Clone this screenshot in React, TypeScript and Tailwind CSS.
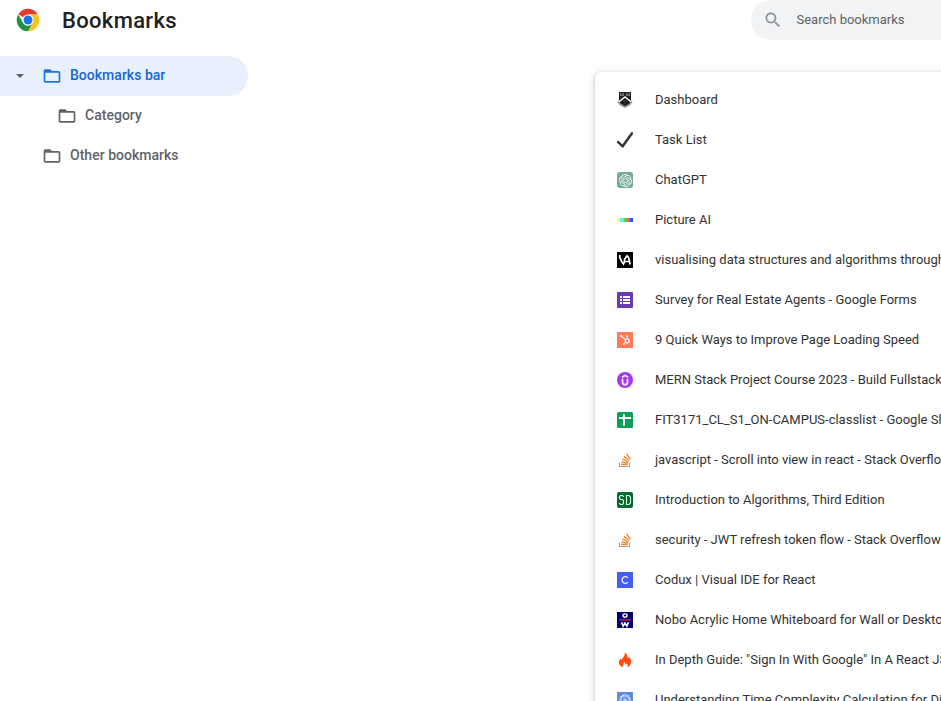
import type { ReactNode } from 'react';
import { SiOpenai, SiHubspot } from 'react-icons/si';

function Svg({ children }: { children: ReactNode }) {
  return (
    <svg width="16" height="16" viewBox="0 0 16 16" className="block shrink-0">
      {children}
    </svg>
  );
}

function ChromeLogo() {
  return (
    <svg width="24" height="24" viewBox="0 0 48 48" className="block shrink-0">
      <path d="M24 24 L4.5 12.5 A22.5 22.5 0 0 1 43.5 12.75 L24 12.75 Z" fill="#e33b2e" />
      <path d="M24 12.75 H43.5 A22.5 22.5 0 0 1 24 46.5 L33.74 29.6 Z" fill="#fcc31e" />
      <path d="M4.5 12.75 L14.26 29.6 A11.25 11.25 0 0 0 33.74 29.6 L24 46.5 A22.5 22.5 0 0 1 4.5 12.75 Z" fill="#229342" />
      <circle cx="24" cy="24" r="11.25" fill="#fff" />
      <circle cx="24" cy="24" r="8.9" fill="#1a73e8" />
    </svg>
  );
}

function Folder({ className }: { className: string }) {
  return (
    <svg width="20" height="20" viewBox="0 0 24 24" fill="currentColor" className={`block shrink-0 ${className}`}>
      <path d="M20 6h-8l-2-2H4c-1.1 0-1.99.9-1.99 2L2 18c0 1.1.9 2 2 2h16c1.1 0 2-.9 2-2V8c0-1.1-.9-2-2-2zm0 12H4V8h16v10z" />
    </svg>
  );
}

function Crest() {
  return (
    <Svg>
      <path d="M2 0h12v8l1.500 2c-.5 2.500-3.500 4-7.500 6-4-2-7-3.500-7.500-6L2 8z" fill="#a8a8ab" />
      <path d="M2 0h12v8.500c0 2.500-3 4-6 5.500-3-1.500-6-3-6-5.500z" fill="#202022" />
      <path d="M3 1h4v3H3zM9 1h4v3H9z" fill="#6e7074" />
      <path d="M4 2h2M10 2h2" stroke="#303034" strokeWidth="1" />
      <path d="M2 9.800 8 5l6 4.800" stroke="#fff" strokeWidth="1.400" fill="none" />
      <path d="m8 6.800 3.400 2.900L8 13l-3.400-3.300z" fill="#111" />
      <path d="M6.500 9h1M8.500 9h1M7.500 11h1" stroke="#a0a0a4" strokeWidth=".8" />
      <path d="M3 11.800c1 1.300 3 2 5 3 2-1 4-1.700 5-3" stroke="#77777b" strokeWidth=".8" fill="none" />
    </Svg>
  );
}

function Check() {
  return (
    <Svg>
      <path d="M1.200 10.200 5.700 14.300 15 1.300" stroke="#31363d" strokeWidth="2.500" fill="none" strokeLinejoin="round" strokeLinecap="round" />
    </Svg>
  );
}

function ChatGpt() {
  return (
    <span className="flex size-4 items-center justify-center rounded-[3px] bg-[#75a99b] text-[#f0f7f4]">
      <SiOpenai size={13} />
    </span>
  );
}

function Rainbow() {
  return (
    <Svg>
      <path d="M0 6h3v4H0z" fill="#fff66f" />
      <path d="M3 6h4v4H3z" fill="#55f3e4" />
      <path d="M7 6h3v4H7z" fill="#62c94e" />
      <path d="M10 6h3v4h-3z" fill="#f4604a" />
      <path d="M13 6h3v4h-3z" fill="#354dfa" />
    </Svg>
  );
}

function VisuAlgo() {
  return (
    <Svg>
      <path d="M0 0h16v16H0z" fill="#000" />
      <path d="M2.800 3v2.500l1 2L5 10l1.500 2 1-2V7.500L8.500 6 10 3.800l1.500 1.700.8 3 .8 4M8 9.500h4" stroke="#fff" strokeWidth="1.700" fill="none" />
    </Svg>
  );
}

function Forms() {
  return (
    <Svg>
      <rect width="16" height="16" rx="1" fill="#673ab7" />
      <path d="M3 4h2v2H3zM6 4h7v2H6zM3 7h2v2H3zM6 7h7v2H6zM3 10h2v2H3zM6 10h7v2H6z" fill="#fff" />
    </Svg>
  );
}

function Hubspot() {
  return (
    <span className="flex size-4 items-center justify-center bg-[#ff7a59] text-white">
      <SiHubspot size={10} />
    </span>
  );
}

function Udemy() {
  return (
    <Svg>
      <circle cx="8" cy="8" r="8" fill="#a435f0" />
      <path d="M4.900 5.200 8 3.400l3.100 1.800" stroke="#fff" strokeWidth="1.600" fill="none" />
      <path d="M5.500 6.800v3.600c0 1.500.9 2.300 2.500 2.300s2.500-.8 2.500-2.300V6.800" stroke="#fff" strokeWidth="1.700" fill="none" />
    </Svg>
  );
}

function Sheets() {
  return (
    <Svg>
      <rect width="16" height="16" rx="1.500" fill="#109d59" />
      <path d="M6 2.200h1.900v11.600H6zM2 5h12v2H2z" fill="#fff" />
    </Svg>
  );
}

function StackOverflow() {
  return (
    <Svg>
      <path d="M2.500 10.500v4h10v-4" stroke="#a0a4a8" strokeWidth="1.200" fill="none" />
      <path d="M4.200 12.500h6.600M4.300 9.900l6.500 1.300M5.200 7l6.100 2.900M6.900 4.300l5.200 4.300M9.500 1.700l4 5.600" stroke="#f48225" strokeWidth="1.300" />
    </Svg>
  );
}

function ScienceDirect() {
  return (
    <Svg>
      <rect width="16" height="16" rx="2" fill="#006b2d" />
      <path d="M6.500 5V4.500l-1-1h-2l-1 1v2l1 1h2l1 1v3l-1 1h-2l-1-1V11M9.500 3.500h2.500L13.500 5v6L12 12.500H9.500z" stroke="#e4f8e9" strokeWidth="1.100" fill="none" />
    </Svg>
  );
}

function Codux() {
  return (
    <Svg>
      <path d="M0 0h16v16H0z" fill="#485df0" />
      <path d="M10.900 6A3.200 3.400 0 1 0 10.900 10" stroke="#eef0ff" strokeWidth="1.300" fill="none" />
    </Svg>
  );
}

function Officeworks() {
  return (
    <Svg>
      <path d="M0 0h16v16H0z" fill="#000075" />
      <ellipse cx="8" cy="3.600" rx="2" ry="1.700" stroke="#fff" strokeWidth="1.400" fill="none" />
      <path d="M2 7h12v1.700H2z" fill="#b01745" />
      <path d="m4.600 10.200 1.500 3.900L8 11l1.900 3.100 1.500-3.900" stroke="#fff" strokeWidth="1.600" fill="none" />
    </Svg>
  );
}

function Flame() {
  return (
    <Svg>
      <path d="M7.500.8c3 1.200 3.500 3.500 3 5.700.8-.4 1-1 1.100-1.700C14 7 14.700 9 13.900 11.500c-.5 1.800-1.800 3-3.700 3.700.8-1.700.3-3-.7-4-.1 1-.7 1.400-1.200 1.800.1-1.400-.4-2.200-1.100-3-.2 1.600-1.500 2.500-1.300 5.100C3 14.200 1.600 12 2 9.500c.2-1.300.8-2.400 1.500-3.300.1 1 .4 1.700 1 2.100C5.300 5.700 8.500 4.500 7.500.8z" fill="#ff4c0b" />
    </Svg>
  );
}

function Gear() {
  return (
    <Svg>
      <path d="M0 0h16v16H0z" fill="#628bdd" />
      <circle cx="8" cy="8" r="5" stroke="#e9f2ff" strokeWidth="1.300" strokeDasharray="1.800 .7" fill="none" />
      <circle cx="8" cy="8" r="4" stroke="#c4d9fb" strokeWidth=".8" fill="none" />
      <circle cx="8" cy="8" r="1.800" fill="#b9d2fb" />
    </Svg>
  );
}

const bookmarks: [ReactNode, string][] = [
  [<Crest />, 'Dashboard'],
  [<Check />, 'Task List'],
  [<ChatGpt />, 'ChatGPT'],
  [<Rainbow />, 'Picture AI'],
  [<VisuAlgo />, 'visualising data structures and algorithms through animation'],
  [<Forms />, 'Survey for Real Estate Agents - Google Forms'],
  [<Hubspot />, '9 Quick Ways to Improve Page Loading Speed'],
  [<Udemy />, 'MERN Stack Project Course 2023 - Build Fullstack App'],
  [<Sheets />, 'FIT3171_CL_S1_ON-CAMPUS-classlist - Google Sheets'],
  [<StackOverflow />, 'javascript - Scroll into view in react - Stack Overflow'],
  [<ScienceDirect />, 'Introduction to Algorithms, Third Edition'],
  [<StackOverflow />, 'security - JWT refresh token flow - Stack Overflow'],
  [<Codux />, 'Codux | Visual IDE for React'],
  [<Officeworks />, 'Nobo Acrylic Home Whiteboard for Wall or Desktop'],
  [<Flame />, 'In Depth Guide: "Sign In With Google" In A React JS'],
  [<Gear />, 'Understanding Time Complexity Calculation for Dijkstra'],
];

export default function App() {
  return (
    <div className="flex h-[701px] w-[941px] flex-col overflow-hidden bg-white font-[Roboto,sans-serif]">
      <header className="flex h-14 shrink-0 items-start">
        <div className="flex h-10 flex-1 items-center pl-4">
          <ChromeLogo />
          <h1 className="ml-[22px] pt-0.5 text-[22px] leading-none font-medium tracking-[0.33px] text-[#202124]">Bookmarks</h1>
        </div>
        <div className="flex h-10 w-[190px] items-center rounded-l-full bg-[#f1f3f4] pl-3 text-[13px] text-[#5f6368]">
          <svg width="20" height="20" viewBox="0 0 24 24" fill="#8d9094" className="shrink-0">
            <path d="M15.5 14h-.79l-.28-.27C15.41 12.590 16 11.110 16 9.500 16 5.910 13.090 3 9.500 3S3 5.910 3 9.500 5.910 16 9.500 16c1.610 0 3.090-.59 4.230-1.570l.27.28v.79l5 4.990L20.490 19l-4.990-5zm-6 0C7.010 14 5 11.990 5 9.500S7.010 5 9.500 5 14 7.010 14 9.500 11.990 14 9.500 14z" />
          </svg>
          <span className="ml-[13.5px]">Search bookmarks</span>
        </div>
      </header>
      <div className="flex min-h-0 flex-1">
        <nav className="w-[248px] shrink-0 text-sm font-medium tracking-[0.02px] text-[#5f6368]">
          <div className="flex h-10 items-center rounded-r-full bg-[#e8f0fe] pl-4 text-[#1967d2]">
            <svg width="8" height="4" viewBox="0 0 8 4" className="shrink-0">
              <path d="M0 0h8L4 4z" fill="#5f6368" />
            </svg>
            <Folder className="ml-[18px] text-[#1a73e8]" />
            <span className="ml-2 pb-0.5">Bookmarks bar</span>
          </div>
          <div className="flex h-10 items-center pl-[57px]">
            <Folder className="" />
            <span className="ml-2 pb-0.5">Category</span>
          </div>
          <div className="flex h-10 items-center pl-[42px]">
            <Folder className="" />
            <span className="ml-2 pb-0.5">Other bookmarks</span>
          </div>
        </nav>
        <main className="flex-1 overflow-hidden pt-4 pl-[347px]">
          <ul className="h-[700px] w-[600px] rounded-md bg-white pt-2 text-[13px] text-[#333] shadow-[0_1px_2px_0_rgba(60,64,67,0.3),0_2px_6px_2px_rgba(60,64,67,0.15)]">
            {bookmarks.map(([icon, title], i) => (
              <li key={i} className="flex h-10 items-center gap-[22px] pl-[22px] whitespace-nowrap">
                {icon}
                <span>{title}</span>
              </li>
            ))}
          </ul>
        </main>
      </div>
    </div>
  );
}
